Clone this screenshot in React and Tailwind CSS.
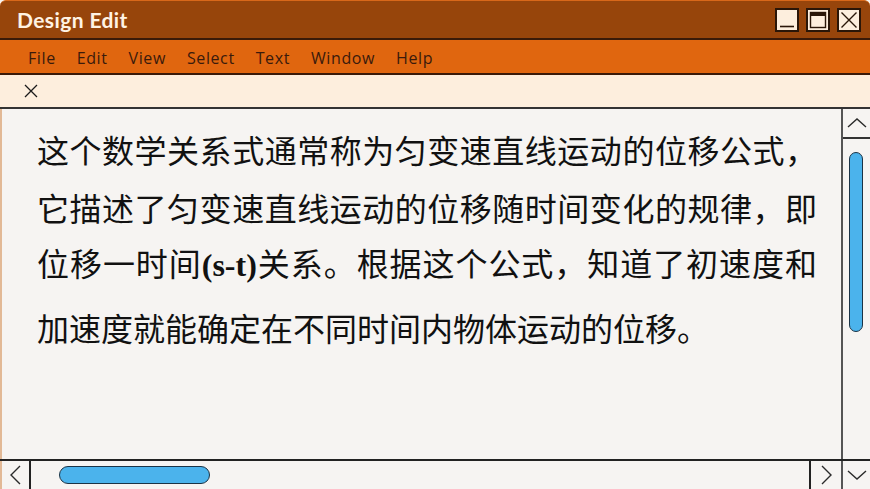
import React from 'react';

const menus = ['File', 'Edit', 'View', 'Select', 'Text', 'Window', 'Help'];

const lines = [
  { text: '这个数学关系式通常称为匀变速直线运动的位移公式，', lead: 'leading-[58px]' },
  { text: '它描述了匀变速直线运动的位移随时间变化的规律，即', lead: 'leading-[58px]' },
];

const Chevron = ({ d }) => (
  <svg width="22" height="22" viewBox="0 0 22 22" fill="none" stroke="#2a2a2a" strokeWidth="1.4">
    <path d={d} />
  </svg>
);

const WinButton = ({ children }) => (
  <div className="w-[24px] h-[24px] border-2 border-[#2a1608] bg-[#fdeedd] flex items-center justify-center">
    {children}
  </div>
);

const App = () => {
  return (
    <div className="w-[870px] h-[489px] flex flex-col overflow-hidden bg-[#f6f4f2]">
      {/* title bar */}
      <div className="h-[40px] shrink-0 bg-[#97450b] border-t border-[#d8681a] border-b-2 border-b-[#3a1a08] rounded-t-md flex items-center justify-between pl-[17px] pr-[9px]">
        <span className="text-[#fff3e4] text-[21px] font-bold font-['Lato',sans-serif] tracking-[0.4px]">
          Design Edit
        </span>
        <div className="flex gap-[7px]">
          <WinButton>
            <svg width="20" height="20" viewBox="0 0 20 20">
              <path d="M3 16.5H17" stroke="#2a1608" strokeWidth="1.6" />
            </svg>
          </WinButton>
          <WinButton>
            <svg width="20" height="20" viewBox="0 0 20 20" fill="none">
              <rect x="2.5" y="2.5" width="15" height="15" stroke="#2a1608" strokeWidth="1.4" />
              <rect x="2.5" y="2.5" width="15" height="3.5" fill="#2a1608" />
            </svg>
          </WinButton>
          <WinButton>
            <svg width="20" height="20" viewBox="0 0 20 20">
              <path d="M2.5 2.5L17.5 17.5M17.5 2.5L2.5 17.5" stroke="#2a1608" strokeWidth="1.4" />
            </svg>
          </WinButton>
        </div>
      </div>

      {/* menu bar */}
      <div className="h-[35px] shrink-0 bg-[#e0660f] border-b-2 border-[#3a1a08] flex items-center pt-[3px] pl-[28px] gap-[21px] font-['Open_Sans',sans-serif] text-[16px] text-[#3a1a0c] tracking-[0.6px]">
        {menus.map((m) => (
          <span key={m}>{m}</span>
        ))}
      </div>

      {/* tab strip */}
      <div className="h-[34px] shrink-0 bg-[#fdeedd] border-b-2 border-[#333] flex items-center pl-[24px]">
        <svg width="14" height="14" viewBox="0 0 14 14">
          <path d="M1 1L13 13M13 1L1 13" stroke="#1a1a1a" strokeWidth="1.3" />
        </svg>
      </div>

      {/* body */}
      <div className="flex-1 flex flex-col min-h-0">
        <div className="flex-1 flex min-h-0">
          <div className="flex-1 border-l-2 border-[#e2b996] pl-[35px] pt-[11px] text-[32px] text-[#111] font-['Noto_Sans_CJK_SC',sans-serif]">
            <div className="w-[780px]">
              {lines.map((l) => (
                <div key={l.text} className={`${l.lead} text-justify [text-align-last:justify]`}>
                  {l.text}
                </div>
              ))}
              <div className="leading-[52px] text-justify [text-align-last:justify]">
                位移一时间<span className="font-bold font-['Liberation_Serif',serif]">(s-t)</span>
                关系。根据这个公式，知道了初速度和
              </div>
              <div className="leading-[72px]">加速度就能确定在不同时间内物体运动的位移。</div>
            </div>
          </div>

          {/* vertical scrollbar */}
          <div className="w-[29px] shrink-0 border-l-2 border-[#555] flex flex-col">
            <div className="h-[30px] border-b-2 border-[#333] flex items-center justify-center">
              <Chevron d="M2 15L11 7L20 15" />
            </div>
            <div className="flex-1 pt-[13px] pl-[6px]">
              <div className="w-[14px] h-[180px] rounded-full bg-[#4bb3ec] border border-[#1b3345]" />
            </div>
          </div>
        </div>

        {/* horizontal scrollbar */}
        <div className="h-[30px] shrink-0 flex border-t-2 border-[#222]">
          <div className="w-[31px] border-l-2 border-[#e2b996] border-r-2 border-r-[#222] flex items-center justify-center">
            <Chevron d="M15 2L6 11L15 20" />
          </div>
          <div className="flex-1 flex items-center pl-[28px]">
            <div className="w-[151px] h-[18px] rounded-full bg-[#4bb3ec] border border-[#1b3345]" />
          </div>
          <div className="w-[32px] border-l-2 border-[#222] flex items-center justify-center">
            <Chevron d="M7 2L16 11L7 20" />
          </div>
          <div className="w-[29px] border-l-2 border-[#555] flex items-center justify-center">
            <Chevron d="M2 7L11 15L20 7" />
          </div>
        </div>
      </div>
    </div>
  );
};

export default App;
